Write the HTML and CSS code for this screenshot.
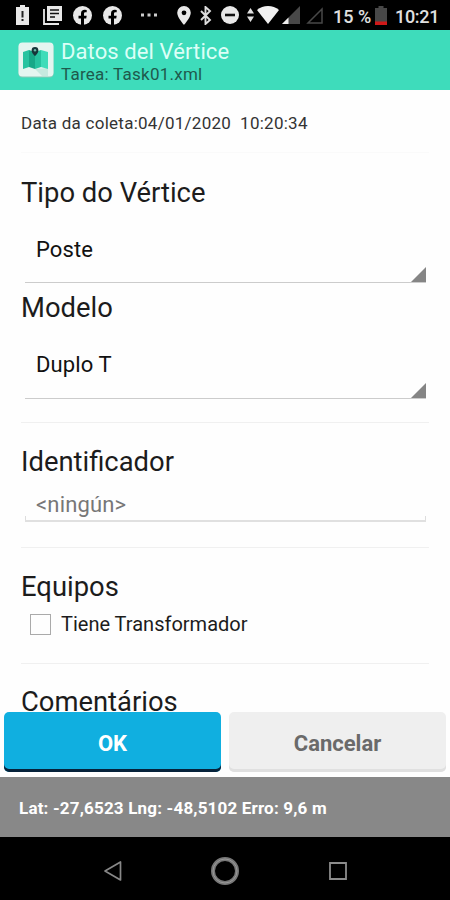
FILE: index.html
```html
<!DOCTYPE html>
<html lang="es">
<head>
<meta charset="utf-8">
<title>Datos del Vértice</title>
<link rel="stylesheet" href="styles.css">
</head>
<body>
<div class="status">
	<svg class="i-alert" width="13" height="20" viewBox="0 0 13 20"><path fill="#e8e8e8" d="M4 0h5v2h4v18H0V2h4z"/><path fill="#222" d="M5.500 6h2v6.500h-2zM5.500 14h2v2h-2z"/></svg>
	<svg class="i-news" width="19" height="19" viewBox="0 0 19 19"><path fill="#e8e8e8" d="M4 0h15v15H4z"/><path fill="none" stroke="#e8e8e8" stroke-width="1.800" d="M1 3v15h15"/><path fill="none" stroke="#111" stroke-width="1.700" d="M7 4h9M7 7.500h9M7 11h5"/></svg>
	<svg class="i-fb" width="19" height="19" viewBox="0 0 19 19"><circle cx="9.500" cy="9.500" r="9.500" fill="#e8e8e8"/><path fill="#000" d="M8 19v-6.500H5.500V9.700H8V7.500C8 5 9.500 3.800 11.700 3.800l2 .2v2.300h-1.200c-1.200 0-1.500.7-1.500 1.500v1.900h2.700l-.5 2.800H11V19z"/></svg>
	<svg class="i-fb2" width="19" height="19" viewBox="0 0 19 19"><circle cx="9.500" cy="9.500" r="9.500" fill="#e8e8e8"/><path fill="#000" d="M8 19v-6.500H5.500V9.700H8V7.500C8 5 9.500 3.800 11.700 3.800l2 .2v2.300h-1.200c-1.200 0-1.500.7-1.500 1.500v1.900h2.700l-.5 2.800H11V19z"/></svg>
	<svg class="i-dots" width="16" height="4" viewBox="0 0 16 4"><path fill="#ccc" d="M0 .5h3v3H0zM6.500.5h3v3h-3zM13 .5h3v3h-3z"/></svg>
	<svg class="i-pin" width="14" height="19" viewBox="0 0 14 19"><path fill="#e8e8e8" fill-rule="evenodd" d="M7 0a6.800 6.800 0 0 0-6.800 6.800C.2 11.500 7 19 7 19s6.800-7.500 6.800-12.200A6.800 6.800 0 0 0 7 0zm0 4.400a2.400 2.400 0 1 1 0 4.800 2.400 2.400 0 0 1 0-4.800z"/></svg>
	<svg class="i-bt" width="12" height="19" viewBox="0 0 12 19"><path fill="none" stroke="#ddd" stroke-width="1.900" d="M1 5l9 9-4.500 4V1L10 5l-9 9"/></svg>
	<svg class="i-dnd" width="18" height="18" viewBox="0 0 18 18"><circle cx="9" cy="9" r="9" fill="#e8e8e8"/><path fill="#111" d="M4 7.700h10v2.600H4z"/></svg>
	<svg class="i-arrows" width="7" height="14" viewBox="0 0 7 14"><path fill="#e0e0e0" d="M3.500 0L7 5.500H0zM3.500 14L0 8.500h7z"/></svg>
	<svg class="i-wifi" width="22" height="18" viewBox="0 0 22 18"><path fill="#f0f0f0" d="M0 4C6-1.300 16-1.300 22 4L11 18z"/></svg>
	<svg class="i-sig" width="18" height="18" viewBox="0 0 18 18"><path fill="#484848" d="M18 0v18H0z"/><path fill="#eee" d="M6.500 11.500V18H0z"/></svg>
	<svg class="i-sig2" width="17" height="17" viewBox="0 0 17 17"><path fill="none" stroke="#484848" stroke-width="1.500" d="M16 2v14H2z"/></svg>
	<span class="percent">15 %</span>
	<svg class="i-batt" width="12" height="19" viewBox="0 0 12 19"><path fill="#484848" d="M3.500 0h5v2H12v14H0V2h3.500z"/><path fill="#d01818" d="M0 15.500h12V19H0z"/></svg>
	<span class="clock">10:21</span>
</div>
<div class="header">
	<svg class="logo" width="36" height="36" viewBox="0 0 36 36">
		<rect x=".5" y="1.500" width="35" height="34" rx="4" fill="#8bc9b8"/>
		<rect x=".5" y=".5" width="35" height="34" rx="4" fill="#e4f5f0"/>
		<path fill="#c5e9df" d="M17 27l13-1v8H24z"/>
		<path fill="#27c3a0" d="M5 10l6-2v17l-6 2zM17 10l6-2v17l-6 2z"/>
		<path fill="#3fdcb9" d="M23 8l7 2v17l-7-2z"/>
		<path fill="#18a888" d="M11 8l6 2v17l-6-2z"/>
		<path fill="#17353a" d="M17 5a3.400 3.400 0 0 0-3.400 3.400C13.600 11 17 14 17 14s3.400-3 3.400-5.600A3.400 3.400 0 0 0 17 5z"/>
		<circle cx="17" cy="8.300" r="1.200" fill="#69bba9"/>
	</svg>
	<div class="titles">
		<div class="title">Datos del Vértice</div>
		<div class="task">Tarea: Task01.xml</div>
	</div>
</div>
<div class="form">
	<div class="date">Data da coleta:04/01/2020&nbsp; 10:20:34</div>
	<div class="line line_date"></div>
	<div class="label label_type">Tipo do Vértice</div>
	<div class="spinner"><span>Poste</span></div>
	<div class="label label_model">Modelo</div>
	<div class="spinner spinner_model"><span>Duplo T</span></div>
	<div class="line line_model"></div>
	<div class="label label_id">Identificador</div>
	<div class="field"><span>&lt;ningún&gt;</span></div>
	<div class="line line_id"></div>
	<div class="label label_equip">Equipos</div>
	<div class="check"><div class="box"></div><span>Tiene Transformador</span></div>
	<div class="line line_equip"></div>
	<div class="label label_comments">Comentários</div>
</div>
<div class="buttons">
	<div class="button ok"><span>OK</span></div>
	<div class="button cancel"><span>Cancelar</span></div>
</div>
<div class="coords"><span>Lat: -27,6523 Lng: -48,5102 Erro: 9,6 m</span></div>
<div class="nav">
	<svg width="20" height="22" viewBox="0 0 20 22"><path fill="none" stroke="#888" stroke-width="1.700" stroke-linejoin="round" d="M18.500 2v18L3 11z"/></svg>
	<svg width="30" height="30" viewBox="0 0 30 30"><circle cx="15" cy="15" r="12" fill="none" stroke="#777" stroke-width="4"/><circle cx="15" cy="15" r="12" fill="none" stroke="#999" stroke-width="1"/></svg>
	<svg width="20" height="20" viewBox="0 0 20 20"><path fill="none" stroke="#8c8c8c" stroke-width="1.800" d="M2 2h16v16H2z"/></svg>
</div>
</body>
</html>
```
FILE: styles.css
```css
body {
	margin: 0;
	width: 450px;
	height: 900px;
	overflow: hidden;
	display: flex;
	flex-flow: column;
	font-family: Roboto, sans-serif;
	background-color: #fefefe;
	color: #1c1c1c;
	white-space: nowrap;
}
svg {
	display: block;
	flex: none;
}

.status {
	display: flex;
	align-items: center;
	flex: none;
	height: 30px;
	padding-left: 16px;
	background-color: #000;
	color: #e0e0e0;
	font-size: 18px;
	font-weight: 500;
}
.i-news {
	margin-left: 14px;
}
.i-fb {
	margin-left: 11px;
}
.i-fb2 {
	margin-left: 11px;
}
.i-dots {
	margin-left: 19px;
}
.i-pin {
	margin-left: 20px;
}
.i-bt {
	margin-left: 9px;
}
.i-dnd {
	margin-left: 9px;
}
.i-arrows {
	margin-left: 8px;
}
.i-wifi {
	margin-left: 3px;
}
.i-sig {
	margin-left: 3px;
}
.i-sig2 {
	margin-left: 6px;
}
.percent {
	width: 38px;
	margin-left: 10px;
	padding-top: 2px;
}
.i-batt {
	margin-left: 4px;
}
.clock {
	margin-left: 8px;
	padding-top: 2px;
	letter-spacing: -0.3px;
}

.header {
	display: flex;
	flex: none;
	box-sizing: border-box;
	height: 60px;
	padding: 12px 0 0 18px;
	background-color: #3edcbb;
}
.titles {
	margin: -3px 0 0 7px;
}
.title {
	font-size: 22px;
	line-height: 26px;
	letter-spacing: 0.1px;
	color: #dcfff7;
}
.task {
	font-size: 17px;
	line-height: 19px;
	letter-spacing: 0.25px;
	color: #1e5a4d;
}

.form {
	flex: none;
	box-sizing: border-box;
	height: 622px;
	padding: 0 21px;
	overflow: hidden;
}
.date {
	height: 62px;
	line-height: 66px;
	font-size: 17px;
	letter-spacing: 0.26px;
	color: #333;
}
.line {
	height: 1px;
	background-color: #f0f0f0;
}
.line_date {
	background-color: #fafafa;
}
.label {
	height: 32px;
	line-height: 33px;
	font-size: 27.4px;
}
.label_type {
	margin-top: 24px;
}
.label_model {
	margin-top: 9px;
}
.label_id, .label_equip {
	margin-top: 23px;
}
.label_comments {
	margin-top: 22px;
}
.spinner {
	box-sizing: border-box;
	height: 74px;
	margin: 0 3px 0 4px;
	padding-left: 11px;
	line-height: 81px;
	font-size: 22px;
	letter-spacing: 0.1px;
	color: #111;
	border-bottom: 1px solid #ccc;
	background: linear-gradient(135deg, transparent 48%, #858585 52%) right bottom / 15px 15px no-repeat;
}
.spinner_model {
	height: 75px;
}
.line_model {
	margin-top: 23px;
}
.field {
	box-sizing: border-box;
	height: 44px;
	margin: 0 3px 0 4px;
	padding-left: 11px;
	line-height: 53px;
	font-size: 22px;
	letter-spacing: 0.15px;
	color: #777;
	border-bottom: 2px solid #e0e0e0;
	background: linear-gradient(#ddd, #ddd) left bottom / 1px 4px no-repeat, linear-gradient(#ddd, #ddd) right bottom / 1px 4px no-repeat;
}
.line_id {
	margin-top: 25px;
}
.check {
	display: flex;
	align-items: center;
	height: 42px;
	padding-left: 9px;
	font-size: 20px;
}
.box {
	box-sizing: border-box;
	width: 21px;
	height: 21px;
	margin-right: 10px;
	border: 1px solid #aaa;
}
.line_equip {
	margin-top: 18px;
}

.buttons {
	display: flex;
	flex: none;
	height: 65px;
	padding: 0 4px;
	gap: 8px;
}
.button {
	box-sizing: border-box;
	flex: 1;
	height: 60px;
	line-height: 63px;
	border-radius: 5px;
	text-align: center;
	font-size: 22px;
	font-weight: bold;
}
.ok {
	background-color: #10afe0;
	color: #fff;
	box-shadow: inset 0 -3px #06223a;
}
.cancel {
	background-color: #efefef;
	color: #6a6a6a;
	box-shadow: inset 0 -3px #e0e0e0;
}
.coords {
	flex: none;
	height: 60px;
	line-height: 62px;
	padding-left: 19px;
	background-color: #888;
	color: #fff;
	font-size: 17px;
	font-weight: bold;
	letter-spacing: 0.18px;
}
.nav {
	display: flex;
	flex: none;
	align-items: center;
	justify-content: space-between;
	box-sizing: border-box;
	height: 63px;
	padding: 4px 102px 0 102px;
	background-color: #000;
}
```
